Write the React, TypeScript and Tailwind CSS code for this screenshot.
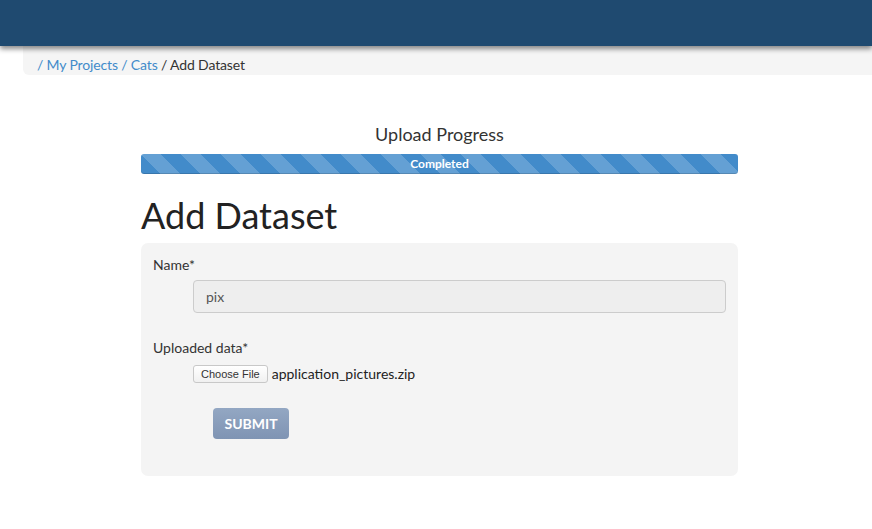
import React from 'react';

export default function App() {
  return (
    <div className="min-h-[529px] bg-white font-['Lato','Open_Sans',sans-serif] text-[#333]">
      <div className="relative z-10 h-[46px] bg-[#1f4a70] shadow-[0_3px_5px_rgba(0,0,0,0.45)]" />

      <div className="ml-[23px] h-[29px] rounded-bl-md bg-[#f5f5f5] pl-[14px] pt-[9px] text-[14px] leading-[20px] tracking-[-0.15px]">
        <span className="text-[#428bca]">/ My Projects / Cats</span>
        <span className="text-[#333]"> / Add Dataset</span>
      </div>

      <div className="ml-[141px] w-[597px]">
        <div className="mt-[46px] text-center text-[18px] leading-[26px] text-[#333]">Upload Progress</div>
        <div className="mt-[7px] flex h-[20px] items-center justify-center rounded-[3px] bg-[#428bca] bg-[linear-gradient(45deg,rgba(255,255,255,0.18)_25%,transparent_25%,transparent_50%,rgba(255,255,255,0.18)_50%,rgba(255,255,255,0.18)_75%,transparent_75%,transparent)] bg-[length:40px_40px] shadow-[inset_0_-1px_0_rgba(0,0,0,0.15)]">
          <span className="text-[12px] font-bold leading-none text-white">Completed</span>
        </div>

        <h1 className="mt-[21px] text-[36px] leading-[40px] font-normal text-[#222]">Add Dataset</h1>

        <div className="mt-[8px] rounded-[7px] bg-[#f4f4f4] px-[12px] pt-[12px] pb-[37px]">
          <div className="text-[14px] leading-[20px]">Name*</div>
          <div className="mt-[5px] ml-[40px] flex h-[33px] items-center rounded-[4px] border border-[#cccccc] bg-[#eeeeee] px-[12px] text-[14px] text-[#555]">
            pix
          </div>

          <div className="mt-[25px] text-[14px] leading-[20px]">Uploaded data*</div>
          <div className="mt-[7px] ml-[40px] flex items-center gap-[4px]">
            <span className="flex h-[18px] items-center rounded-[3px] border border-[#c8c8c8] bg-gradient-to-b from-white to-[#f0f0f0] px-[7px] font-['Liberation_Sans',Arial,sans-serif] text-[11px] text-[#333]">
              Choose File
            </span>
            <span className="text-[14px] leading-[18px] text-[#222]">application_pictures.zip</span>
          </div>

          <div className="mt-[25px] ml-[60px] flex h-[31px] w-[76px] items-center justify-center rounded-[4px] bg-gradient-to-b from-[#93a7c3] to-[#7f94b3] text-[14px] font-bold text-white">
            SUBMIT
          </div>
        </div>
      </div>
    </div>
  );
}
